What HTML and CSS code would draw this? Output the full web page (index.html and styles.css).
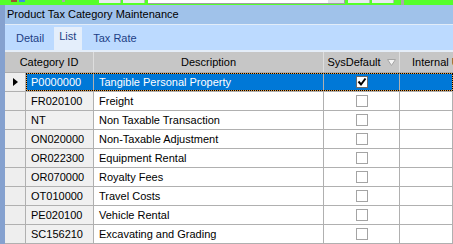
FILE: index.html
```html
<!DOCTYPE html>
<html lang="en">
<head>
  <meta charset="UTF-8">
  <title>Product Tax Category Maintenance</title>
  <link rel="stylesheet" href="styles.css">
</head>
<body>
  <div class="toolbar">
    <span class="tb-icon tb-red"></span>
    <span class="tb-icon tb-blue"></span>
    <span class="tb-dot"></span>
    <span class="tb-btn tb-first"></span>
    <span class="tb-btn"></span>
    <span class="tb-input"><span class="tb-drop"></span></span>
    <span class="tb-btn tb-after-input"></span>
    <span class="tb-btn"></span>
    <span class="tb-sep"></span>
  </div>

  <div class="window">
    <div class="edge"></div>
    <div class="main">
      <div class="title">Product Tax Category Maintenance</div>

      <div class="tabs">
        <span class="tab">Detail</span>
        <span class="tab active">List</span>
        <span class="tab tab-rate">Tax Rate</span>
      </div>

      <div class="grid">
        <div class="head">
          <div class="hcell">Category ID</div>
          <div class="hcell">Description</div>
          <div class="hcell">SysDefault
            <svg class="filter" width="9" height="7" viewBox="0 0 9 7">
              <path d="M0.5 0.5 H8.5 L4.5 6.5 Z" fill="#f4f4f4" stroke="#a4a4a4"/>
            </svg>
          </div>
          <div class="hcell hcell-last">Internal Use</div>
        </div>

        <div class="row selected">
          <div class="cell sel-cell"><span class="arrow"></span></div>
          <div class="cell id-cell">P0000000</div>
          <div class="cell">Tangible Personal Property</div>
          <div class="cell check-cell">
            <span class="box checked">
              <svg width="10" height="10" viewBox="0 0 10 10">
                <path d="M1.5 4.5 L4 7.5 L8.5 1.5" fill="none" stroke="#000" stroke-width="2"/>
              </svg>
            </span>
          </div>
          <div class="cell"></div>
        </div>

        <div class="row">
          <div class="cell sel-cell"></div>
          <div class="cell id-cell">FR020100</div>
          <div class="cell">Freight</div>
          <div class="cell check-cell"><span class="box"></span></div>
          <div class="cell"></div>
        </div>

        <div class="row">
          <div class="cell sel-cell"></div>
          <div class="cell id-cell">NT</div>
          <div class="cell">Non Taxable Transaction</div>
          <div class="cell check-cell"><span class="box"></span></div>
          <div class="cell"></div>
        </div>

        <div class="row">
          <div class="cell sel-cell"></div>
          <div class="cell id-cell">ON020000</div>
          <div class="cell">Non-Taxable Adjustment</div>
          <div class="cell check-cell"><span class="box"></span></div>
          <div class="cell"></div>
        </div>

        <div class="row">
          <div class="cell sel-cell"></div>
          <div class="cell id-cell">OR022300</div>
          <div class="cell">Equipment Rental</div>
          <div class="cell check-cell"><span class="box"></span></div>
          <div class="cell"></div>
        </div>

        <div class="row">
          <div class="cell sel-cell"></div>
          <div class="cell id-cell">OR070000</div>
          <div class="cell">Royalty Fees</div>
          <div class="cell check-cell"><span class="box"></span></div>
          <div class="cell"></div>
        </div>

        <div class="row">
          <div class="cell sel-cell"></div>
          <div class="cell id-cell">OT010000</div>
          <div class="cell">Travel Costs</div>
          <div class="cell check-cell"><span class="box"></span></div>
          <div class="cell"></div>
        </div>

        <div class="row">
          <div class="cell sel-cell"></div>
          <div class="cell id-cell">PE020100</div>
          <div class="cell">Vehicle Rental</div>
          <div class="cell check-cell"><span class="box"></span></div>
          <div class="cell"></div>
        </div>

        <div class="row">
          <div class="cell sel-cell"></div>
          <div class="cell id-cell">SC156210</div>
          <div class="cell">Excavating and Grading</div>
          <div class="cell check-cell"><span class="box"></span></div>
          <div class="cell"></div>
        </div>
      </div>
    </div>
  </div>
</body>
</html>
```

FILE: styles.css
```css
body {
  margin: 0;
  font-family: "Liberation Sans", Arial, sans-serif;
  font-size: 11px;
  color: #000;
  background-color: #fff;
  overflow: hidden;
}

/* cut-off toolbar strip at the very top */
.toolbar {
  height: 5px;
  background-color: #55ff2b;
  display: flex;
  align-items: flex-start;
}
.tb-icon {
  width: 6px;
  height: 2px;
}
.tb-red {
  margin-left: 11px;
  background-color: #a0522d;
}
.tb-blue {
  margin-left: 2px;
  background-color: #3c8ce0;
}
.tb-dot {
  margin-left: 37px;
  width: 3px;
  height: 2px;
  background-color: #a8a8a8;
}
.tb-btn {
  margin-left: 2px;
  width: 21px;
  height: 3px;
  background-color: #e8ecee;
  border-right: 1px solid #b8b8b8;
}
.tb-first {
  margin-left: 34px;
}
.tb-after-input {
  margin-left: 3px;
}
.tb-input {
  margin-left: 3px;
  width: 196px;
  height: 3px;
  background-color: #fff;
  border-right: 1px solid #a0a0a0;
  border-bottom: 1px solid #a0a0a0;
  display: flex;
  justify-content: flex-end;
}
.tb-drop {
  width: 16px;
  background-color: #e0e4e8;
}
.tb-sep {
  margin-left: 7px;
  width: 3px;
  height: 5px;
  background-color: #a8a8a8;
}

.window {
  display: flex;
}
.edge {
  width: 5px;
  flex-shrink: 0;
  background-color: #85a1cf;
}
.main {
  flex: 1;
  min-width: 0;
}

.title {
  height: 19px;
  line-height: 19px;
  padding-left: 2px;
  background-color: #a0c2ea;
  border-bottom: 1px solid #e2ecf8;
}

.tabs {
  height: 25px;
  display: flex;
  align-items: flex-end;
  gap: 5px;
  padding-left: 6px;
  background-color: #bcdaff;
  border-bottom: 2px solid #e4edf8;
}
.tab {
  line-height: 13px;
  padding: 0 5px 5px;
  color: #1c3f86;
}
.tab.active {
  padding: 3px 6px 7px 5px;
  background-color: #e4eefb;
}
.tab-rate {
  margin-left: 1px;
}

.head {
  display: grid;
  grid-template-columns: 89px 230px 76px 1fr;
  height: 21px;
  box-sizing: border-box;
  background-color: #c6c6c6;
  border-bottom: 1px solid #acacac;
}
.hcell {
  display: flex;
  align-items: center;
  justify-content: center;
  gap: 6px;
  white-space: nowrap;
  overflow: hidden;
  border-right: 1px solid #dedede;
}
.hcell-last {
  justify-content: flex-start;
  padding-left: 12px;
  border-right: none;
}
.filter {
  display: block;
}

.row {
  position: relative;
  display: grid;
  grid-template-columns: 21px 68px 230px 76px 1fr;
  height: 19px;
}
.cell {
  box-sizing: border-box;
  padding-left: 5px;
  line-height: 18px;
  white-space: nowrap;
  overflow: hidden;
  border-right: 1px solid #b0b0b0;
  border-bottom: 1px solid #b0b0b0;
}
.sel-cell {
  padding: 0;
  display: flex;
  align-items: center;
  justify-content: center;
  background-color: #eeeeee;
}
.id-cell {
  background-color: #f0f0f0;
}
.check-cell {
  padding: 0;
  display: flex;
  align-items: center;
  justify-content: center;
}
.box {
  width: 12px;
  height: 12px;
  box-sizing: border-box;
  border: 1px solid #a4a4a4;
  background-color: #fff;
}
.box.checked {
  border-color: #6a6a6a;
}
.box svg {
  display: block;
}
.arrow {
  width: 0;
  height: 0;
  border-left: 5px solid #000;
  border-top: 4px solid transparent;
  border-bottom: 4px solid transparent;
}

.row.selected .cell:not(.sel-cell) {
  background-color: #0078d7;
  color: #fff;
}
/* focus rectangle: orange under black dots */
.row.selected::before,
.row.selected::after {
  content: "";
  position: absolute;
  left: 21px;
  right: 0;
  top: 0;
  bottom: 1px;
  pointer-events: none;
}
.row.selected::before {
  border: 1px solid #f0a040;
}
.row.selected::after {
  border: 1px dotted #000;
}
```
